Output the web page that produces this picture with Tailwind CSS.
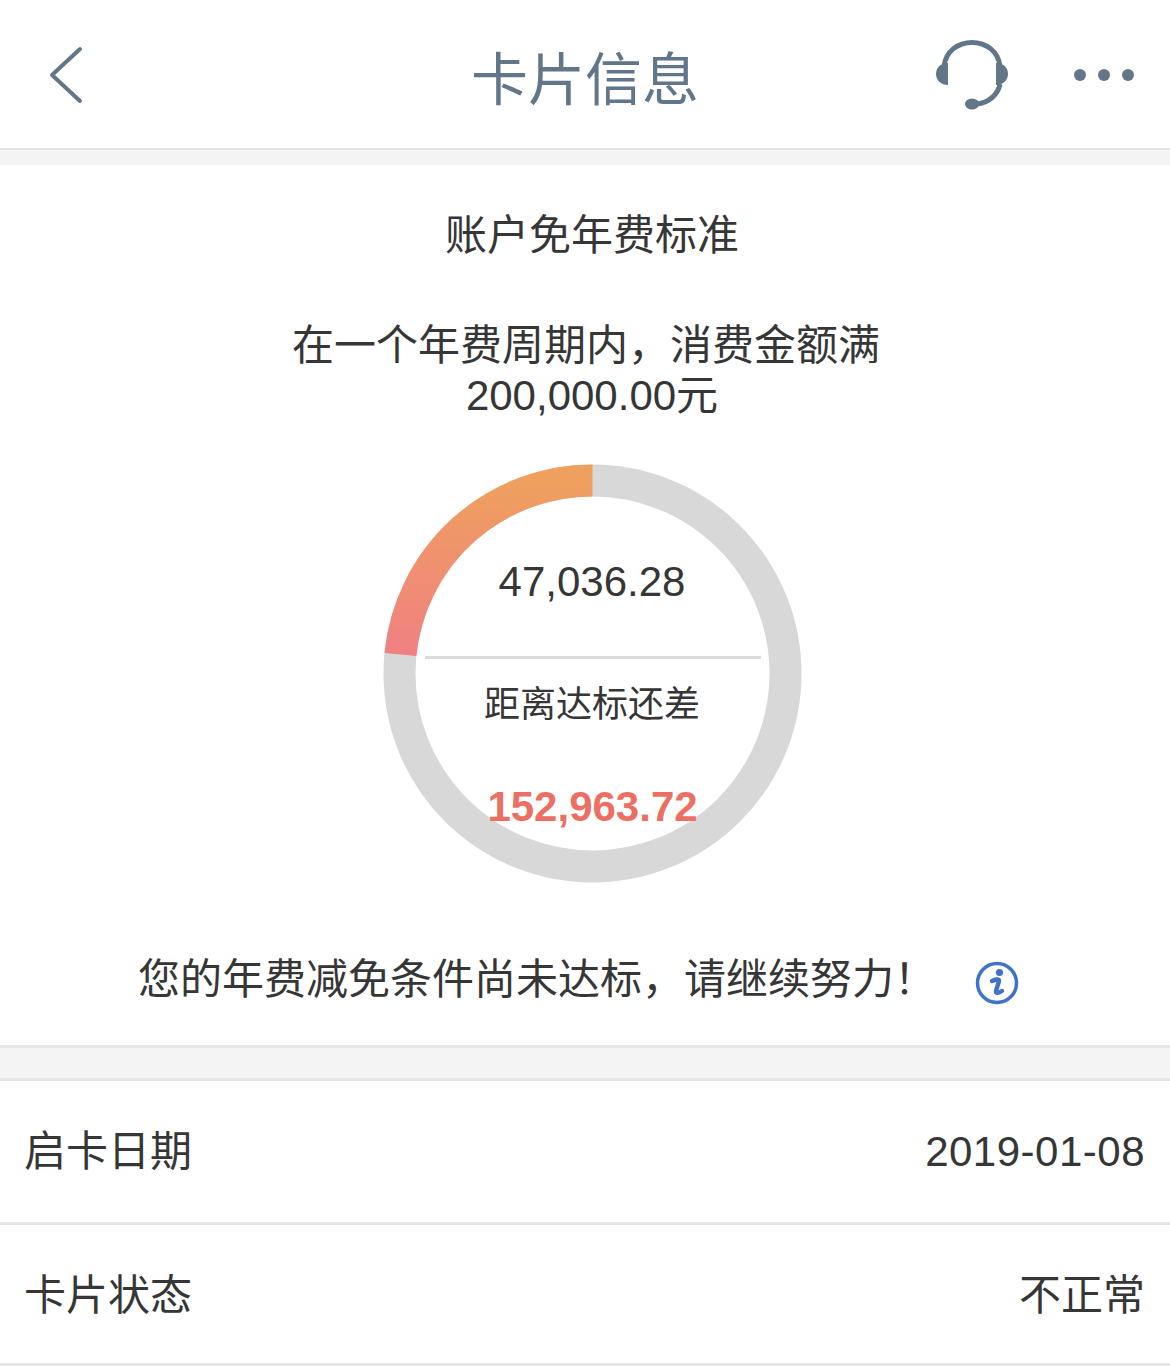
<!DOCTYPE html>
<html lang="zh-CN">
<head>
<meta charset="utf-8">
<title>卡片信息</title>
<script src="https://cdn.jsdelivr.net/npm/@tailwindcss/browser@4"></script>
</head>
<body class="bg-white overflow-hidden font-['Liberation_Sans','Noto_Sans_CJK_SC',sans-serif] text-[#363636]">
<div class="w-[1170px] h-[1366px] flex flex-col bg-[#f4f4f4]">
  <!-- Navigation bar -->
  <header class="h-[150px] shrink-0 bg-white border-b-2 border-[#e4e4e4] flex items-center justify-between relative">
    <svg class="ml-[48px] mt-[4px] w-[36px] h-[60px]" viewBox="0 0 36 60" fill="none" stroke="#62768a" stroke-width="4" stroke-linecap="round" stroke-linejoin="round"><path d="M32 3 L4 29 L32 55"/></svg>
    <h1 class="absolute left-[471px] top-[46px] text-[57px] leading-[68px] text-[#62768a] font-normal">卡片信息</h1>
    <div class="flex items-center mr-[36px] gap-[64px]">
      <svg class="w-[74px] h-[74px] mt-[2px]" viewBox="0 0 74 74" fill="none">
        <path d="M8 28 C10 13 22 4.5 36 4.5 C50 4.5 62 13 64 28" stroke="#62768a" stroke-width="5"/>
        <path d="M64 46 C62 57 52 65 41 66" stroke="#62768a" stroke-width="5"/>
        <path d="M12 25 L12 47 C4 47 0 41 0 36 C0 30 4 25 12 25 Z M60 25 L60 47 C68 47 72 41 72 36 C72 30 68 25 60 25 Z" fill="#62768a"/>
        <ellipse cx="36" cy="66" rx="7" ry="5.5" fill="#62768a"/>
      </svg>
      <div class="flex gap-[12px] mt-[1px]">
        <span class="w-[12px] h-[12px] rounded-full bg-[#62768a]"></span>
        <span class="w-[12px] h-[12px] rounded-full bg-[#62768a]"></span>
        <span class="w-[12px] h-[12px] rounded-full bg-[#62768a]"></span>
      </div>
    </div>
  </header>

  <!-- Annual fee waiver card -->
  <section class="mt-[15px] h-[883px] shrink-0 bg-white border-b-[3px] border-[#e6e6e6] flex flex-col items-center pl-[14px]">
    <h2 class="mt-[46px] text-[42px] leading-[50px] font-normal">账户免年费标准</h2>
    <p class="mt-[59px] w-[620px] text-center text-[42px] leading-[51px]"><span class="block -ml-[12px]">在一个年费周期内，消费金额满</span><span class="block -mt-[1px]">200,000.00元</span></p>

    <!-- Progress ring -->
    <div class="relative mt-[43px] w-[418px] h-[418px] flex flex-col items-center">
      <svg class="absolute inset-0 overflow-visible" width="418" height="418" viewBox="0 0 418 418" fill="none">
        <defs>
          <linearGradient id="ring" x1="0" y1="0" x2="0" y2="1">
            <stop offset="0" stop-color="#efa05e"/>
            <stop offset="1" stop-color="#f08082"/>
          </linearGradient>
        </defs>
        <circle cx="209.5" cy="209.5" r="193" stroke="#d8d8d8" stroke-width="32"/>
        <path d="M209.5 16.5 A193 193 0 0 0 17.44 190.5" stroke="url(#ring)" stroke-width="32"/>
      </svg>
      <div class="relative mt-[91px] text-[42px] leading-[54px]">47,036.28</div>
      <div class="relative mt-[47px] ml-[2px] w-[336px] h-[3px] bg-[#dcdcdc]"></div>
      <div class="relative mt-[24px] text-[36px] leading-[44px]">距离达标还差</div>
      <div class="relative mt-[55px] ml-[1px] text-[42px] leading-[50px] font-bold text-[#ec6f63]">152,963.72</div>
    </div>

    <!-- Status message -->
    <div class="mt-[71px] w-[880px] relative h-[54px] flex items-center -ml-[14px]">
      <p class="ml-[-7px] text-[42px] leading-[54px] whitespace-nowrap">您的年费减免条件尚未达标，请继续努力！</p>
    </div>
  </section>

  <!-- Card details -->
  <section class="mt-[30px] shrink-0 bg-white border-t-[3px] border-[#e6e6e6]">
    <div class="h-[144px] pl-[24px] pr-[25px] flex items-center justify-between border-b-[3px] border-[#e6e6e6] text-[42px]">
      <span>启卡日期</span><span class="tracking-[0.5px]">2019-01-08</span>
    </div>
    <div class="h-[141px] pl-[24px] pr-[25px] pt-[2px] flex items-center justify-between border-b-[3px] border-[#e6e6e6] text-[42px]">
      <span>卡片状态</span><span>不正常</span>
    </div>
  </section>
</div>

<!-- Info badge beside the status message -->
<svg class="absolute left-[975px] top-[961px] w-[44px] h-[44px]" viewBox="0 0 44 44" fill="none">
  <circle cx="22" cy="22" r="19.5" stroke="#3f72c8" stroke-width="3.5"/>
  <circle cx="24.5" cy="11.5" r="3.6" fill="#3f72c8"/>
  <path d="M17 20 C20 18.5 24.5 17.5 24 20 L21 30 C20.5 32.5 23 32.5 27 30" stroke="#3f72c8" stroke-width="4.4" stroke-linecap="round" stroke-linejoin="round"/>
</svg>
</body>
</html>
